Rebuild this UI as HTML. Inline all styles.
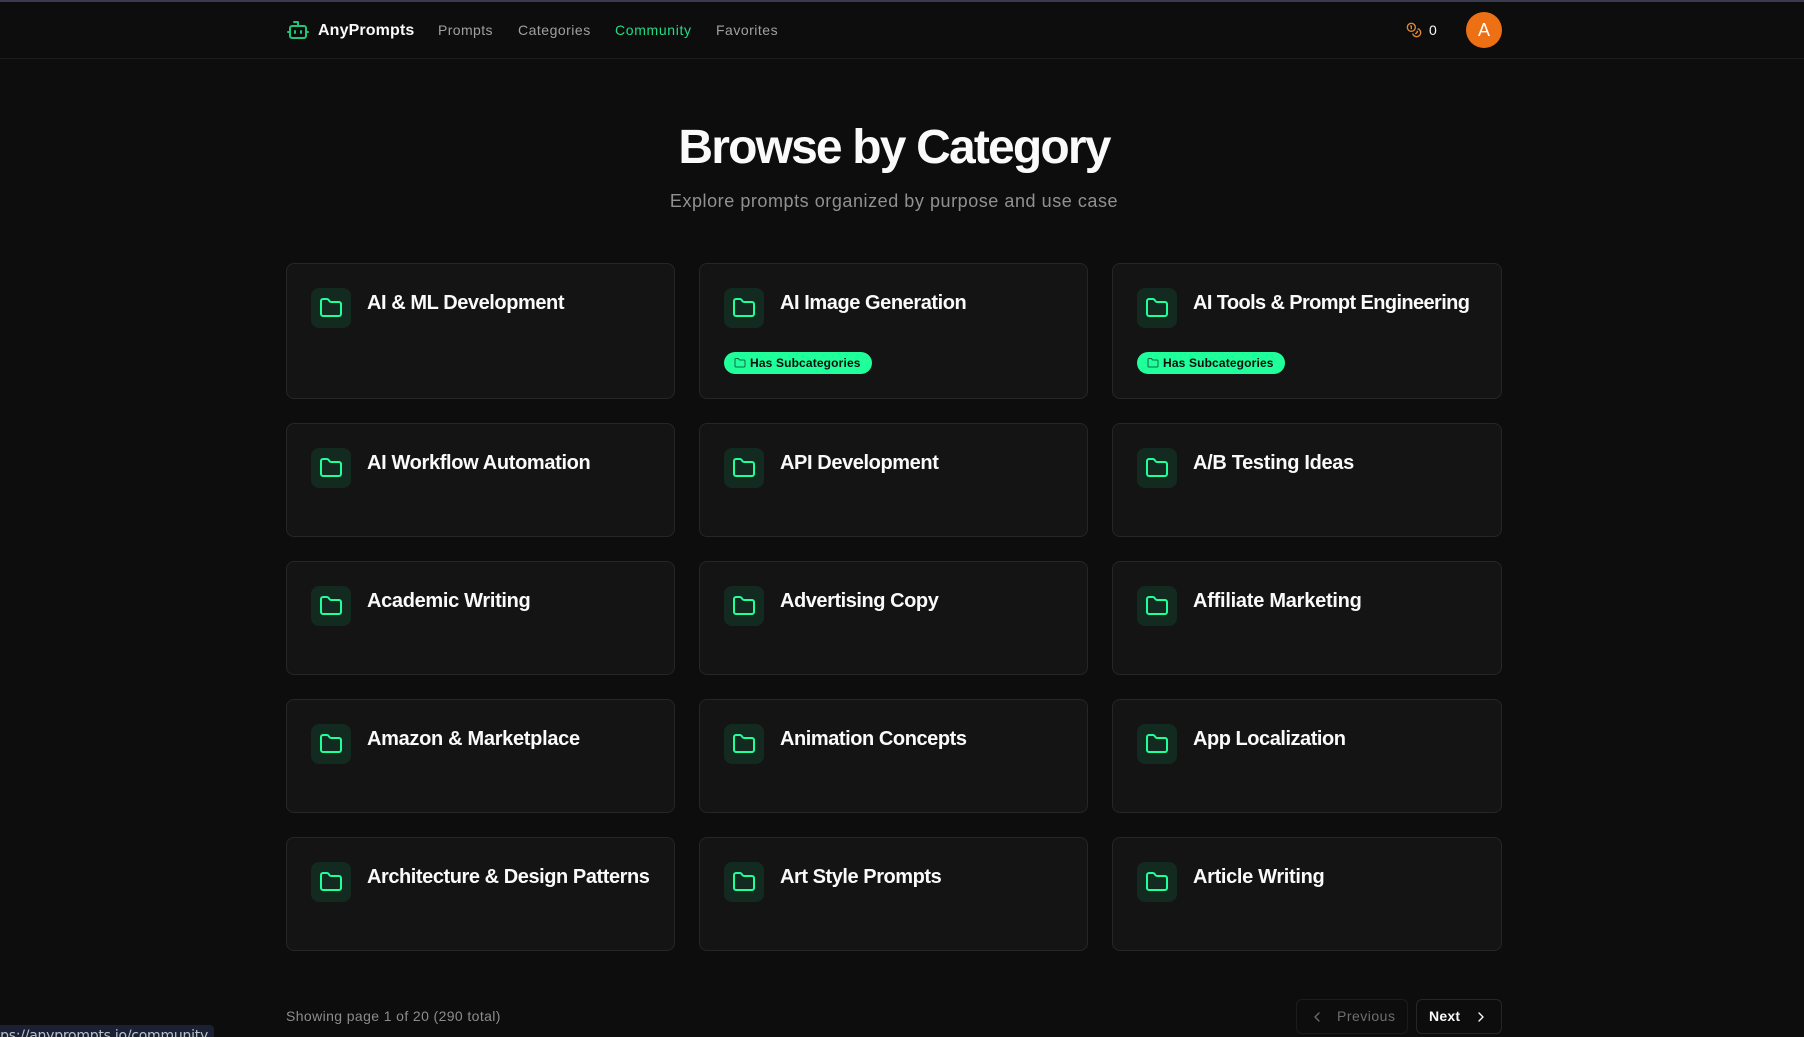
<!DOCTYPE html>
<html lang="en">
<head>
<meta charset="utf-8">
<title>Browse by Category</title>
<style>
*{box-sizing:border-box;margin:0;padding:0}
html,body{width:1804px;height:1037px;overflow:hidden;background:#0d0d0d;font-family:"Liberation Sans",sans-serif;color:#fafafa}
.abs{position:absolute;white-space:nowrap}
#top{position:absolute;left:0;top:0;width:1804px;height:2px;background:#3b3b4f}
#hr{position:absolute;left:0;top:58px;width:1804px;height:1px;background:#1c1c1c}
.nav{top:20px;font-size:14px;line-height:20px;color:#a0a0a0}
svg{display:block;fill:none;stroke:currentColor;stroke-width:2;stroke-linecap:round;stroke-linejoin:round}
.card{position:absolute;background:#141414;border:1px solid #262626;border-radius:8px}
.c1{left:286px;width:389px}
.c2{left:699px;width:389px}
.c3{left:1112px;width:390px}
.ib{position:absolute;left:24px;top:24px;width:40px;height:40px;border-radius:8px;background:#132a20;color:#1fff9a;display:flex;align-items:center;justify-content:center}
.t{position:absolute;left:80px;top:25px;font-size:20px;line-height:28px;font-weight:700;color:#fafafa;white-space:nowrap}
.badge{position:absolute;left:24px;top:88px;width:148px;height:22px;border-radius:11px;background:#1fff9a;color:#0d0d0d;font-size:12px;line-height:22px;font-weight:700;padding-left:26px;white-space:nowrap;letter-spacing:.15px}
.badge svg{position:absolute;left:10px;top:5px;color:#0f6b47}
.btn{position:absolute;top:999px;height:35px;border-radius:6px;border:1px solid #262626;background:#0d0d0d}
</style>
</head>
<body>
<svg width="0" height="0" style="position:absolute"><symbol id="f" viewBox="0 0 24 24"><path d="M20 20a2 2 0 0 0 2-2V8a2 2 0 0 0-2-2h-7.9a2 2 0 0 1-1.69-.9L9.6 3.9A2 2 0 0 0 7.93 3H4a2 2 0 0 0-2 2v13a2 2 0 0 0 2 2Z"/></symbol></svg>
<div id="top"></div>
<div id="hr"></div>

<svg class="abs" style="left:286px;top:18px;color:#1fc57c" width="24" height="24" viewBox="0 0 24 24"><path d="M12 8V4H8"/><rect x="4" y="8" width="16" height="12" rx="2"/><path d="M2 14h2"/><path d="M20 14h2"/><path d="M15 13v2"/><path d="M9 13v2"/></svg>
<div class="abs" style="left:318px;top:21px;font-size:16px;line-height:20px;font-weight:700;color:#fafafa;letter-spacing:.13px">AnyPrompts</div>
<div class="abs nav" style="left:438px;letter-spacing:.4px">Prompts</div>
<div class="abs nav" style="left:518px;letter-spacing:.5px">Categories</div>
<div class="abs nav" style="left:615px;color:#1fdc86;letter-spacing:.65px">Community</div>
<div class="abs nav" style="left:716px;letter-spacing:.5px">Favorites</div>

<svg class="abs" style="left:1406px;top:22px;color:#e08a35" width="16" height="16" viewBox="0 0 24 24"><circle cx="8" cy="8" r="6"/><path d="M18.09 10.37A6 6 0 1 1 10.34 18"/><path d="M7 6h1v4"/><path d="m16.71 13.88.7.71-2.82 2.82"/></svg>
<div class="abs" style="left:1429px;top:20px;font-size:14px;line-height:20px;color:#fafafa">0</div>
<div class="abs" style="left:1466px;top:12px;width:36px;height:36px;border-radius:50%;background:#ee7014;color:#fff;font-size:18px;line-height:36px;text-align:center">A</div>

<div class="abs" style="left:0;width:1788px;top:124px;text-align:center;font-size:48px;line-height:48px;font-weight:700;color:#fafafa;letter-spacing:-1.83px">Browse by Category</div>
<div class="abs" style="left:0;width:1788px;top:187px;text-align:center;font-size:18px;line-height:28px;color:#919191;letter-spacing:.55px">Explore prompts organized by purpose and use case</div>

<div class="card c1" style="top:263px;height:136px"><div class="ib"><svg width="24" height="24"><use href="#f"/></svg></div><div class="t" style="letter-spacing:-.43px">AI &amp; ML Development</div></div>
<div class="card c2" style="top:263px;height:136px"><div class="ib"><svg width="24" height="24"><use href="#f"/></svg></div><div class="t" style="letter-spacing:-.43px">AI Image Generation</div><div class="badge"><svg width="12" height="12"><use href="#f"/></svg>Has Subcategories</div></div>
<div class="card c3" style="top:263px;height:136px"><div class="ib"><svg width="24" height="24"><use href="#f"/></svg></div><div class="t" style="letter-spacing:-.61px">AI Tools &amp; Prompt Engineering</div><div class="badge"><svg width="12" height="12"><use href="#f"/></svg>Has Subcategories</div></div>

<div class="card c1" style="top:423px;height:114px"><div class="ib"><svg width="24" height="24"><use href="#f"/></svg></div><div class="t" style="letter-spacing:-.35px">AI Workflow Automation</div></div>
<div class="card c2" style="top:423px;height:114px"><div class="ib"><svg width="24" height="24"><use href="#f"/></svg></div><div class="t" style="letter-spacing:-.4px">API Development</div></div>
<div class="card c3" style="top:423px;height:114px"><div class="ib"><svg width="24" height="24"><use href="#f"/></svg></div><div class="t" style="letter-spacing:-.32px">A/B Testing Ideas</div></div>

<div class="card c1" style="top:561px;height:114px"><div class="ib"><svg width="24" height="24"><use href="#f"/></svg></div><div class="t" style="letter-spacing:-.32px">Academic Writing</div></div>
<div class="card c2" style="top:561px;height:114px"><div class="ib"><svg width="24" height="24"><use href="#f"/></svg></div><div class="t" style="letter-spacing:-.45px">Advertising Copy</div></div>
<div class="card c3" style="top:561px;height:114px"><div class="ib"><svg width="24" height="24"><use href="#f"/></svg></div><div class="t" style="letter-spacing:-.25px">Affiliate Marketing</div></div>

<div class="card c1" style="top:699px;height:114px"><div class="ib"><svg width="24" height="24"><use href="#f"/></svg></div><div class="t" style="letter-spacing:-.31px">Amazon &amp; Marketplace</div></div>
<div class="card c2" style="top:699px;height:114px"><div class="ib"><svg width="24" height="24"><use href="#f"/></svg></div><div class="t" style="letter-spacing:-.44px">Animation Concepts</div></div>
<div class="card c3" style="top:699px;height:114px"><div class="ib"><svg width="24" height="24"><use href="#f"/></svg></div><div class="t" style="letter-spacing:-.47px">App Localization</div></div>

<div class="card c1" style="top:837px;height:114px"><div class="ib"><svg width="24" height="24"><use href="#f"/></svg></div><div class="t" style="letter-spacing:-.44px">Architecture &amp; Design Patterns</div></div>
<div class="card c2" style="top:837px;height:114px"><div class="ib"><svg width="24" height="24"><use href="#f"/></svg></div><div class="t" style="letter-spacing:-.45px">Art Style Prompts</div></div>
<div class="card c3" style="top:837px;height:114px"><div class="ib"><svg width="24" height="24"><use href="#f"/></svg></div><div class="t" style="letter-spacing:-.33px">Article Writing</div></div>

<div class="abs" style="left:286px;top:1006px;font-size:14px;line-height:20px;color:#8c8c8c;letter-spacing:.39px">Showing page 1 of 20 (290 total)</div>

<div class="btn" style="left:1296px;width:112px;border-color:#1c1c1c"></div>
<svg class="abs" style="left:1309px;top:1009px;color:#6b6b6b" width="16" height="16" viewBox="0 0 24 24"><path d="m15 18-6-6 6-6"/></svg>
<div class="abs" style="left:1337px;top:1006px;font-size:14px;line-height:20px;color:#6e6e6e;letter-spacing:.5px">Previous</div>
<div class="btn" style="left:1416px;width:86px"></div>
<div class="abs" style="left:1429px;top:1006px;font-size:14px;line-height:20px;font-weight:700;color:#fafafa;letter-spacing:.25px">Next</div>
<svg class="abs" style="left:1473px;top:1009px;color:#fafafa" width="16" height="16" viewBox="0 0 24 24"><path d="m9 18 6-6-6-6"/></svg>

<div class="abs" style="left:0;top:1025px;width:214px;height:12px;background:#1b2135;border-radius:0 4px 0 0;overflow:hidden"><div class="abs" style="right:6px;top:1px;font-size:14px;line-height:20px;color:#bcc1ca;font-family:'DejaVu Sans',sans-serif;letter-spacing:-.25px">https://anyprompts.io/community</div></div>
</body>
</html>
